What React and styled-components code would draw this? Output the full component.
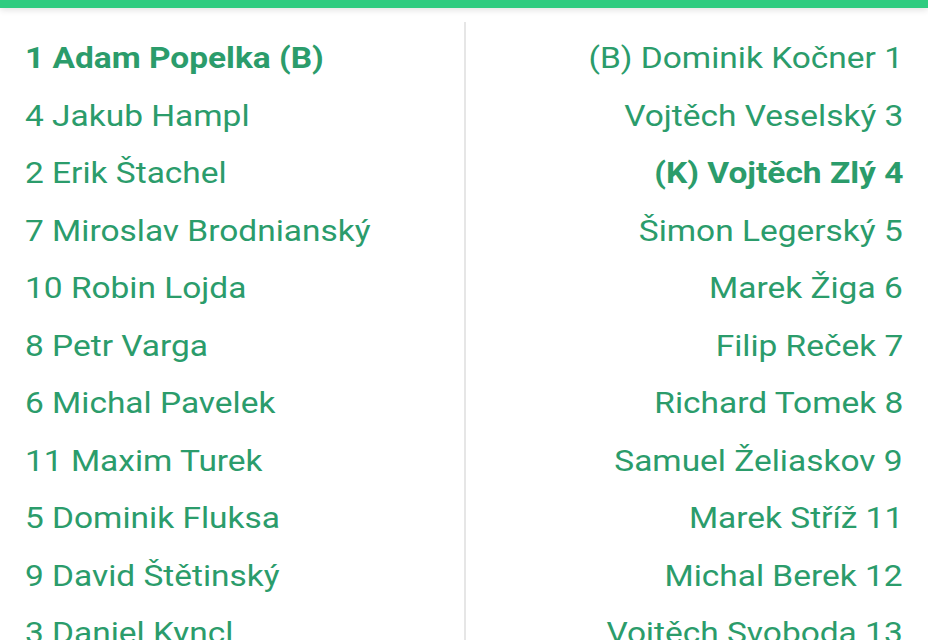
import React from "react";
import styled, { createGlobalStyle } from "styled-components";

const GlobalStyle = createGlobalStyle`
  body {
    margin: 0;
    background: #ffffff;
    font-family: Roboto, "Liberation Sans", sans-serif;
    overflow: hidden;
  }
`;

const TopBar = styled.div`
  height: 8px;
  background: #2ecc80;
  box-shadow: 0 2px 6px rgba(0, 0, 0, 0.12);
  position: relative;
  z-index: 1;
`;

const Lineups = styled.div`
  display: grid;
  grid-template-columns: 1fr 1fr;
  padding-top: 14px;
`;

const Column = styled.div`
  display: flex;
  flex-direction: column;
  padding: 7px 25px 0;
  align-items: ${({ side }) => (side === "away" ? "flex-end" : "flex-start")};
  border-left: ${({ side }) => (side === "away" ? "2px solid #e6e6e6" : "none")};
`;

const Player = styled.div`
  height: 57.5px;
  display: flex;
  align-items: center;
  font-size: 30px;
  color: #2b9c6b;
  white-space: nowrap;
  font-weight: ${({ bold }) => (bold ? 700 : 400)};
  transform: scaleX(1.115);
  transform-origin: ${({ side }) => (side === "away" ? "right" : "left")} center;
`;

const home = [
  { name: "1 Adam Popelka (B)", bold: true },
  { name: "4 Jakub Hampl" },
  { name: "2 Erik Štachel" },
  { name: "7 Miroslav Brodnianský" },
  { name: "10 Robin Lojda" },
  { name: "8 Petr Varga" },
  { name: "6 Michal Pavelek" },
  { name: "11 Maxim Turek" },
  { name: "5 Dominik Fluksa" },
  { name: "9 David Štětinský" },
  { name: "3 Daniel Kyncl" },
];

const away = [
  { name: "(B) Dominik Kočner 1" },
  { name: "Vojtěch Veselský 3" },
  { name: "(K) Vojtěch Zlý 4", bold: true },
  { name: "Šimon Legerský 5" },
  { name: "Marek Žiga 6" },
  { name: "Filip Reček 7" },
  { name: "Richard Tomek 8" },
  { name: "Samuel Želiaskov 9" },
  { name: "Marek Stříž 11" },
  { name: "Michal Berek 12" },
  { name: "Vojtěch Svoboda 13" },
];

const App = () => {
  return (
    <>
      <GlobalStyle />
      <TopBar />
      <Lineups>
        <Column side="home">
          {home.map((player, index) => (
            <Player key={index} side="home" bold={player.bold}>
              {player.name}
            </Player>
          ))}
        </Column>
        <Column side="away">
          {away.map((player, index) => (
            <Player key={index} side="away" bold={player.bold}>
              {player.name}
            </Player>
          ))}
        </Column>
      </Lineups>
    </>
  );
};

export default App;
